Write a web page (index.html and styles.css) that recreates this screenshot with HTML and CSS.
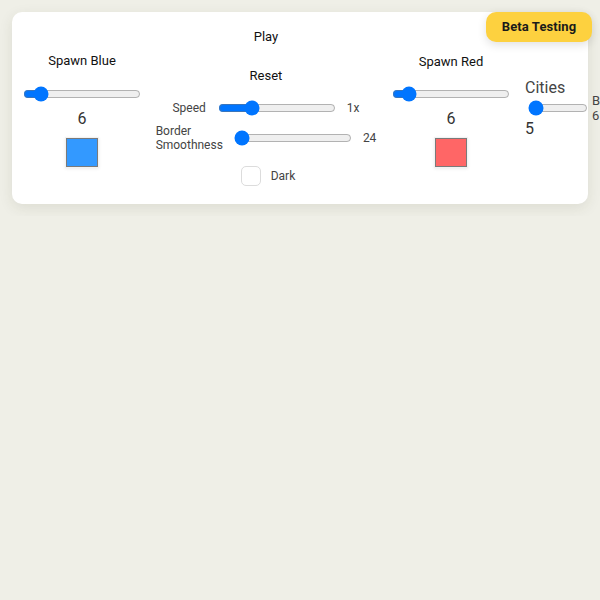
FILE: index.html
```html
<!DOCTYPE html>
<html>
<head>
<meta charset="utf-8">
<link rel="stylesheet" href="styles.css">
</head>
<body>
<div class="card">
  <div class="col spawn">
    <div class="title">Spawn Blue</div>
    <input class="range w118" type="range" min="1" max="50" value="6">
    <div class="num">6</div>
    <div class="swatch-wrap"><div class="swatch blue"></div></div>
  </div>
  <div class="col mid">
    <button class="btn">Play</button>
    <button class="btn reset">Reset</button>
    <div class="row speed">
      <span class="lbl">Speed</span>
      <input class="range w118" type="range" min="0" max="100" value="26">
      <span class="val">1x</span>
    </div>
    <div class="row smooth">
      <span class="lbl">Border<br>Smoothness</span>
      <input class="range w118" type="range" min="24" max="100" value="24">
      <span class="val">24</span>
    </div>
    <label class="row dark">
      <input class="check" type="checkbox">
      <span class="lbl">Dark</span>
    </label>
  </div>
  <div class="col spawn red-col">
    <div class="title">Spawn Red</div>
    <input class="range w118" type="range" min="1" max="55" value="6">
    <div class="num">6</div>
    <div class="swatch-wrap"><div class="swatch red"></div></div>
  </div>
  <div class="col cities">
    <div class="ctitle">Cities</div>
    <input class="range w60" type="range" min="5" max="20" value="5">
    <div class="cnum">5</div>
  </div>
  <div class="col bots">
    <div class="blbl">B</div>
    <div class="bval">6</div>
  </div>
  <div class="badge">Beta Testing</div>
</div>
</body>
</html>
```
FILE: styles.css
```css
html, body {
  margin: 0;
  padding: 0;
  overflow: hidden;
  background: #efefe7;
  font-family: Roboto, "Liberation Sans", sans-serif;
  color: #111;
}
.card {
  position: relative;
  margin: 12px;
  width: 576px;
  height: 192px;
  box-sizing: border-box;
  background: #fff;
  border-radius: 10px;
  box-shadow: 0 4px 14px rgba(60, 60, 30, 0.10);
  display: flex;
  align-items: flex-start;
  padding-left: 11px;
}
.col {
  display: flex;
  flex-direction: column;
  align-items: center;
  flex: none;
}
.range {
  margin: 0;
  height: 16px;
  accent-color: #0075ff;
}
.w118 { width: 118px; }
.w60 { width: 60px; }
.spawn { width: 118px; padding-top: 41px; }
.title {
  font-size: 13px;
  line-height: 16px;
  margin-bottom: 17px;
}
.red-col .title { margin-top: 1px; margin-bottom: 16px; }
.num {
  font-size: 16px;
  line-height: 19px;
  color: #333;
  margin-top: 7px;
}
.swatch-wrap {
  margin-top: 9px;
  padding: 1px;
  background: #f2f2f2;
  box-shadow: 0 1px 3px rgba(0,0,0,0.08);
}
.swatch {
  width: 30px;
  height: 27px;
  border: 1px solid #7a7a7a;
}
.blue { background: #3399ff; }
.red { background: #ff6666; }
.mid {
  width: 250px;
  margin-left: 0;
  padding-top: 15px;
}
.btn {
  font-family: inherit;
  font-size: 13px;
  line-height: 16px;
  color: #111;
  background: #fff;
  border: none;
  padding: 2px 6px;
  margin: 0;
}
.reset { margin-top: 19px; }
.row {
  display: flex;
  align-items: center;
  gap: 11px;
}
.lbl {
  font-size: 12px;
  line-height: 14px;
  color: #444;
}
.val {
  font-size: 12px;
  line-height: 14px;
  color: #444;
}
.speed { margin-top: 14px; }
.speed .lbl { margin-right: 1px; }
.smooth { margin-top: 8px; }
.dark { margin-top: 14px; gap: 10px; margin-left: 4px; }
.check {
  appearance: none;
  -webkit-appearance: none;
  width: 20px;
  height: 20px;
  margin: 0;
  border: 1px solid #dcdcdc;
  border-radius: 5px;
  background: #fff;
}
.red-col { margin-left: 1px; }
.cities {
  align-items: flex-start;
  margin-left: 15px;
  padding-top: 66px;
}
.ctitle {
  font-size: 16px;
  line-height: 19px;
  color: #444;
}
.cities .range { margin-top: 3px; margin-left: 3px; }
.cnum {
  font-size: 16px;
  line-height: 19px;
  color: #333;
  margin-top: 3px;
  margin-left: 0;
}
.bots {
  align-items: flex-start;
  margin-left: 4px;
  padding-top: 81px;
}
.blbl, .bval {
  font-size: 13px;
  line-height: 15px;
  color: #444;
}
.badge {
  position: absolute;
  top: 0;
  right: -4px;
  width: 106px;
  height: 30px;
  box-sizing: border-box;
  background: #fdd13f;
  border-radius: 10px;
  box-shadow: 0 3px 10px rgba(0,0,0,0.12);
  font-size: 13px;
  font-weight: 700;
  line-height: 30px;
  text-align: center;
  color: #1a1a1a;
  letter-spacing: 0.1px;
}
```
